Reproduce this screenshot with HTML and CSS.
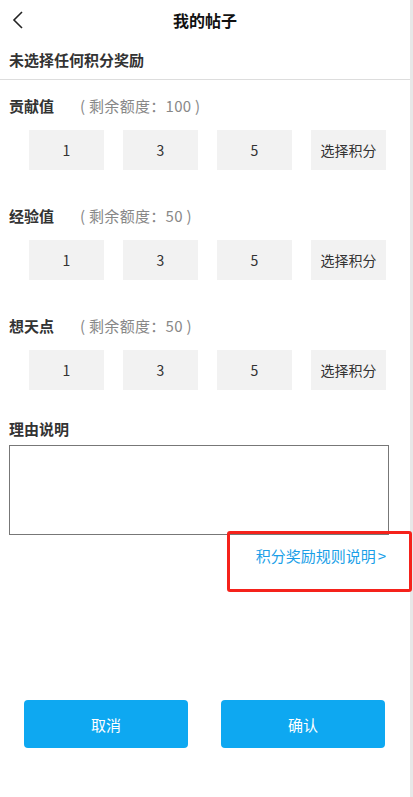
FILE: index.html
```html
<!DOCTYPE html>
<html lang="zh-CN">
<head>
  <meta charset="UTF-8">
  <meta name="viewport" content="width=device-width, initial-scale=1.0">
  <title>我的帖子</title>
  <link rel="stylesheet" href="styles.css">
</head>
<body>
  <div class="page">
    <header class="topbar">
      <span class="back">
        <svg width="12" height="18" viewBox="0 0 12 18"><polyline points="10,1 2,9 10,17" fill="none" stroke="#222" stroke-width="1.6"/></svg>
      </span>
      <h1 class="title">我的帖子</h1>
    </header>

    <div class="status">未选择任何积分奖励</div>

    <section class="reward">
      <div class="reward-head"><span class="reward-name">贡献值</span><span class="reward-left">( 剩余额度：100 )</span></div>
      <div class="choices">
        <div class="choice">1</div>
        <div class="choice">3</div>
        <div class="choice">5</div>
        <div class="choice">选择积分</div>
      </div>
    </section>

    <section class="reward">
      <div class="reward-head"><span class="reward-name">经验值</span><span class="reward-left">( 剩余额度：50 )</span></div>
      <div class="choices">
        <div class="choice">1</div>
        <div class="choice">3</div>
        <div class="choice">5</div>
        <div class="choice">选择积分</div>
      </div>
    </section>

    <section class="reward">
      <div class="reward-head"><span class="reward-name">想天点</span><span class="reward-left">( 剩余额度：50 )</span></div>
      <div class="choices">
        <div class="choice">1</div>
        <div class="choice">3</div>
        <div class="choice">5</div>
        <div class="choice">选择积分</div>
      </div>
    </section>

    <div class="reason-title">理由说明</div>
    <textarea class="reason"></textarea>
    <div class="rule-row"><a class="rule-link">积分奖励规则说明<span class="arrow">&gt;</span></a></div>

    <div class="actions">
      <button class="btn">取消</button>
      <button class="btn">确认</button>
    </div>

    <!-- annotation box -->
    <div class="mark"></div>
  </div>
</body>
</html>
```

FILE: styles.css
```css
body {
  margin: 0;
  background: #fff;
  font-family: "Noto Sans CJK SC", "Liberation Sans", sans-serif;
  color: #333;
}

.page {
  position: relative;
  width: 410px;
  min-height: 797px;
  border-right: 3px solid #e8e8e8;
}

/* Header */
.topbar {
  height: 40px;
  display: flex;
  align-items: center;
  justify-content: center;
  position: relative;
}

.back {
  position: absolute;
  left: 12px;
  top: 10px;
}

.title {
  margin: 0;
  font-size: 16px;
  font-weight: bold;
  color: #111;
}

.status {
  height: 40px;
  line-height: 40px;
  padding-left: 9px;
  font-size: 15px;
  font-weight: bold;
  border-bottom: 1px solid #ddd;
  box-sizing: border-box;
}

/* Reward rows */
.reward {
  padding-top: 16px;
}

.reward + .reward {
  padding-top: 36px;
}

.reward-head {
  height: 20px;
  line-height: 20px;
  padding-left: 9px;
  display: flex;
  font-size: 15px;
}

.reward-name {
  font-weight: bold;
  width: 71px;
}

.reward-left {
  color: #888;
  letter-spacing: 0.3px;
}

.choices {
  display: flex;
  gap: 19px;
  padding: 14px 0 0 29px;
}

.choice {
  width: 75px;
  height: 40px;
  line-height: 40px;
  text-align: center;
  background: #f2f2f2;
  font-size: 14px;
  color: #333;
}

/* Reason */
.reason-title {
  margin-top: 29px;
  height: 20px;
  line-height: 20px;
  padding-left: 9px;
  font-size: 15px;
  font-weight: bold;
}

.reason {
  display: block;
  margin: 6px 0 0 9px;
  width: 380px;
  height: 90px;
  box-sizing: border-box;
  border: 1px solid #777;
  resize: none;
  outline: none;
}

.rule-row {
  margin-top: 10px;
  height: 20px;
  line-height: 20px;
  padding-right: 24px;
  text-align: right;
}

.rule-link {
  font-size: 15px;
  color: #1a9fe8;
}

.rule-link .arrow {
  margin-left: 2px;
}

/* Buttons */
.actions {
  display: flex;
  gap: 33px;
  padding-left: 24px;
  margin-top: 135px;
}

.btn {
  width: 164px;
  height: 48px;
  border: none;
  border-radius: 4px;
  background: #0ea8f1;
  color: #fff;
  font-family: inherit;
  font-size: 15px;
  font-weight: normal;
}

.mark {
  position: absolute;
  left: 227px;
  top: 531px;
  width: 185px;
  height: 61px;
  box-sizing: border-box;
  border: 3px solid #f5221b;
  border-radius: 3px;
}
```
